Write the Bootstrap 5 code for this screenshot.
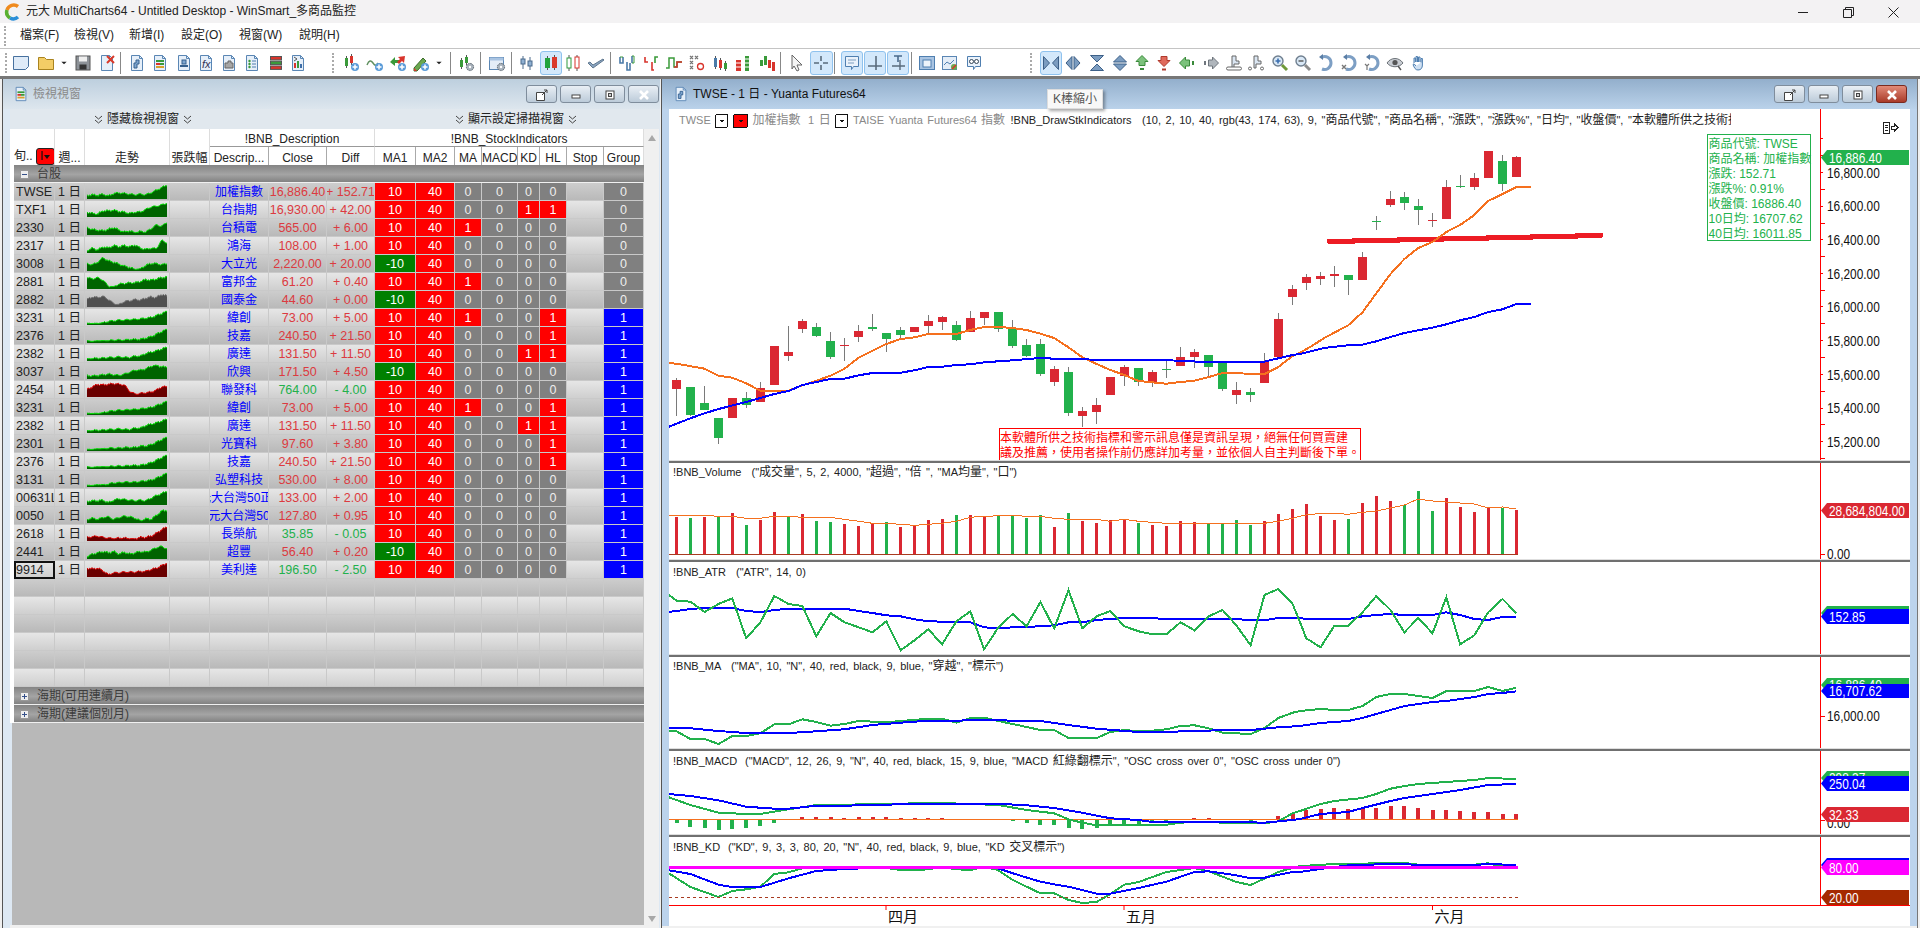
<!DOCTYPE html>
<html>

<head>
    <meta charset="utf-8">
    <title>元大 MultiCharts64</title>
    <link rel="stylesheet" href="https://cdn.jsdelivr.net/npm/bootstrap@5.3.0/dist/css/bootstrap.min.css">
    <style>
        html, body { height: 928px; overflow: hidden; }
        body { background: #f0f0f0; color: #222; position: relative; font: 12px/1.2 "Liberation Sans", "Noto Sans CJK TC", sans-serif; }
        .app-title { height: 23px; background: #f3f2f3; font-size: 12px; color: #222; }
        .app-title .sys { width: 45px; }
        .app-menu { height: 25px; background: #fff; }
        .app-menu #menuRow div { white-space: nowrap; }
        .grip { width: 2px; height: 20px; border-left: 2px dotted #aaa; }
        .tool-row { height: 28px; background: #fff; border-top: 1px solid #c4c4c4; }
        .tool { height: 24px; flex: none; border: 1px solid transparent; border-radius: 3px; }
        .tool.on { background: #d3e8fb; border-color: #8fc2ee; }
        .tool-sep { width: 1px; height: 22px; background: #888; flex: none; }
        .desk { height: 852px; background: #f0f0f0; border-top: 3px solid #777; }
        .mdi-left { width: 658px; margin-left: 2px; background: #dde8f3; border-left: 1px solid #555; }
        .mdi-right { width: 1257px; margin-left: 1px; background: #bcd3ec; border-left: 1px solid #555; border-right: 1px solid #777; }
        .win-head { height: 30px; flex: none; }
        .mdi-left .win-head { background: linear-gradient(#bdcfde, #dde6ee); color: #8a8a8a; padding-left: 10px; padding-right: 1px; }
        .mdi-right .win-head { background: linear-gradient(#93afcc, #bad2ea); color: #111; font-size: 12px; padding-left: 11px; padding-right: 10px; }
        .wctl { width: 31px; height: 18px; padding: 0; border: 1px solid #7f8d9c; border-radius: 3px; background: linear-gradient(#e9eff5, #bccbd9); margin-left: 3px; line-height: 1; }
        .wctl.shut { background: linear-gradient(#e28a78, #a93b2a); border-color: #7a2a20; }
        .hide-bar { height: 20px; margin-left: 7px; background: #e1e8ee; font-size: 12px; }
        .hide-item { width: 266px; }
        .hide-item + .hide-item { margin-left: 100px; width: 280px; }
        .scan-wrap { margin-left: 7px; height: 799px; }
        .scan-col { width: 634px; }
        .scan-top { background: #fff; padding-left: 4px; }
        .scan-grid { width: 630px; margin: 0; table-layout: fixed; border-collapse: separate; border-spacing: 0; font-size: 12.5px; }
        .scan-grid th { height: 18px; padding: 0; font-weight: 400; font-size: 12px; text-align: center; background: #fff; color: #222; border: 0; border-right: 1px solid #ddd; white-space: nowrap; overflow: hidden; }
        .scan-grid th.under { border-bottom: 1px solid #999; }
        .scan-grid th.sub { border-right: 1px solid #aaa; }
        .scan-grid td { height: 18px; padding: 1px 0 0; line-height: 16px; text-align: center; white-space: nowrap; overflow: hidden; border: 0; border-right: 1px solid #c9c9c9; border-bottom: 1px solid #c9c9c9; color: #222; }
        .scan-grid tr.dim td { background: linear-gradient(#cdcdcd, #b9b9b9); }
        .scan-grid tr.pale td { background: linear-gradient(#e6e6e6, #cfcfcf); }
        .scan-grid td.sym { text-align: left; padding-left: 2px; }
        .scan-grid td.name { color: #0000ff; font-size: 12px; }
        .scan-grid td.rise { color: #dc3a40; }
        .scan-grid td.fall { color: #22b14c; }
        .scan-grid tr td.cr { background: #f00; color: #fff; }
        .scan-grid tr td.cg { background: #008000; color: #fff; }
        .scan-grid tr td.cn { background: #808080; color: #eee; }
        .scan-grid tr td.cb { background: #00f; color: #fff; }
        .scan-grid tr td.sel { outline: 2px solid #111; outline-offset: -2px; }
        .scan-grid tr td.grp { height: 18px; background: linear-gradient(#848484, #a4a4a4 55%, #828282); color: #3c3c3c; font-size: 12px; text-align: left; padding-left: 6px; border-right: 0; border-bottom: 1px solid #f0f0f0; }
        .tree-box { display: inline-block; width: 9px; height: 9px; margin-right: 8px; background: #eee; border: 1px solid #999; position: relative; top: 1px; }
        .tree-box::before { content: ""; position: absolute; left: 1px; right: 1px; top: 3px; height: 1px; background: #35508a; }
        .tree-box.fold::after { content: ""; position: absolute; top: 1px; bottom: 1px; left: 3px; width: 1px; background: #35508a; }
        .clip-mid { display: flex; justify-content: center; overflow: hidden; }
        .clip-mid span { flex: none; }
        .pick { display: inline-flex; align-items: center; justify-content: center; width: 19px; height: 17px; background: #f00; border: 1px solid #222; border-radius: 3px; vertical-align: middle; font-size: 12px; color: #111; margin-left: 3px; }
        .pick i { width: 0; height: 0; border: 3px solid transparent; border-top: 4px solid #111; border-bottom: 0; margin-left: 1px; }
        .scan-rest { background: #b8b8b8; margin-left: 2px; }
        .scan-end { height: 3px; background: #f0f0f0; }
        .scroll-col { width: 15px; background: #f0f0f0; }
        .pane { background: #fff; flex: none; display: block; }
        .pane polyline, .pane rect, .pane path { shape-rendering: crispEdges; }
        .sash { height: 3px; flex: none; background: linear-gradient(#dedede 34%, #707070 34%); }
        .time-row { background: #fff; flex: none; display: block; }
        .chart-col { width: 1241px; margin-left: 7px; }
        .chart-foot { background: #f0f0f0; }
        svg text { font-family: "Liberation Sans", "Noto Sans CJK TC", sans-serif; font-size: 11px; word-spacing: 1.5px; white-space: pre; }
        svg .cj { font-size: 12px; }
        svg text.ax { font-size: 14px; word-spacing: 0; fill: #111; }
        svg text.tg { font-size: 14px; word-spacing: 0; fill: #fff; }
        svg text.nfo { font-size: 12px; fill: #22b14c; word-spacing: 0; }
        svg text.warn { font-size: 12px; fill: #f00; word-spacing: 0; }
        svg text.mon { font-size: 15px; fill: #111; }
        .hint { position: absolute; left: 1047px; top: 89px; width: 56px; height: 20px; background: #f8f8f8; border: 1px solid #ddd; box-shadow: 2px 2px 3px rgba(0, 0, 0, .35); font-size: 12px; line-height: 18px; text-align: center; color: #555; }
    </style>
</head>

<body>
    <div class="app-title d-flex align-items-center">
        <svg width="18" height="18" viewBox="0 0 18 18" class="ms-1 flex-none">
            <path d="M14 3.500A7 7 0 0 0 3 7" fill="none" stroke="#f08a1d" stroke-width="3.500" />
            <path d="M3 7a7 7 0 0 0 3 8" fill="none" stroke="#58b030" stroke-width="3.500" />
            <path d="M6 15a7 7 0 0 0 8-1" fill="none" stroke="#2a8fd8" stroke-width="3.500" />
        </svg>
        <span class="ms-1">元大 MultiCharts64 - Untitled Desktop - WinSmart_多商品監控</span>
        <div class="ms-auto d-flex me-1">
            <div class="sys text-center"><svg width="11" height="11" viewBox="0 0 11 11"><path d="M0 5.500h10" stroke="#222" /></svg></div>
            <div class="sys text-center"><svg width="11" height="11" viewBox="0 0 11 11"><path d="M.5 2.500h8v8h-8zM2.500 2.500v-2h8v8h-2" fill="none" stroke="#222" /></svg></div>
            <div class="sys text-center"><svg width="11" height="11" viewBox="0 0 11 11"><path d="M.5.5l10 10M10.500.5l-10 10" stroke="#222" /></svg></div>
        </div>
    </div>
    <div class="app-menu d-flex align-items-center ps-1">
        <div class="grip"></div>
        <div id="menuRow" class="d-flex"></div>
    </div>
    <div id="toolRow" class="tool-row d-flex align-items-center"></div>

    <div class="desk d-flex">
        <div class="mdi-left d-flex flex-column">
            <div class="win-head d-flex align-items-center">
                <svg width="16" height="18" viewBox="0 0 18 18" id="leftIcon"></svg>
                <span class="ms-1">檢視視窗</span>
                <div class="ms-auto d-flex wctl-row"></div>
            </div>
            <div class="hide-bar d-flex">
                <div class="hide-item d-flex justify-content-center align-items-center gap-1"><span class="dbl"></span>隱藏檢視視窗<span class="dbl"></span></div>
                <div class="hide-item d-flex justify-content-center align-items-center gap-1"><span class="dbl"></span>顯示設定掃描視窗<span class="dbl"></span></div>
            </div>
            <div class="scan-wrap d-flex">
                <div class="scan-col d-flex flex-column">
                    <div class="scan-top">
                        <table class="table scan-grid">
                            <colgroup id="scanCols"></colgroup>
                            <thead>
                                <tr>
                                    <th rowspan="2"><span>旬..</span><span class="pick">I<i></i></span></th>
                                    <th rowspan="2">週...</th>
                                    <th rowspan="2">走勢</th>
                                    <th rowspan="2">張跌幅</th>
                                    <th colspan="3" class="under">!BNB_Description</th>
                                    <th colspan="8" class="under">!BNB_StockIndicators</th>
                                </tr>
                                <tr>
                                    <th class="sub">Descrip...</th>
                                    <th class="sub">Close</th>
                                    <th>Diff</th>
                                    <th class="sub">MA1</th>
                                    <th class="sub">MA2</th>
                                    <th class="sub">MA</th>
                                    <th class="sub">MACD</th>
                                    <th class="sub">KD</th>
                                    <th class="sub">HL</th>
                                    <th class="sub">Stop</th>
                                    <th>Group</th>
                                </tr>
                            </thead>
                            <tbody id="scanBody"></tbody>
                        </table>
                    </div>
                    <div class="scan-rest flex-grow-1"></div>
                    <div class="scan-end"></div>
                </div>
                <div class="scroll-col d-flex flex-column justify-content-between align-items-center py-1">
                    <svg width="10" height="10" viewBox="0 0 10 10"><path d="M5 2l4 6H1z" fill="#a8a8a8" /></svg>
                    <svg width="10" height="10" viewBox="0 0 10 10"><path d="M5 8L1 2h8z" fill="#a8a8a8" /></svg>
                </div>
            </div>
        </div>

        <div class="mdi-right d-flex flex-column">
            <div class="win-head d-flex align-items-center">
                <svg width="16" height="18" viewBox="0 0 18 18" id="rightIcon"></svg>
                <span class="ms-1">TWSE - 1 日 - Yuanta Futures64</span>
                <div class="ms-auto d-flex wctl-row"></div>
            </div>
            <div id="chartCol" class="chart-col d-flex flex-column"></div>
            <div class="chart-foot flex-grow-1"></div>
        </div>
    </div>
    <div class="hint">K棒縮小</div>

    <script>
        const UP = '#da2832', DN = '#22b14c', BLUE = '#0000ff', ORANGE = '#f5701e';
        const FONT_CJK = /[\u3000-\u9fff\uff00-\uffef]+/g;

        // menu
        const menuRow = document.getElementById('menuRow');
        [[20, '檔案(F)'], [74, '檢視(V)'], [129, '新增(I)'], [181, '設定(O)'], [239, '視窗(W)'], [299, '說明(H)']].forEach(([x, t], i, all) => {
            let s = document.createElement('div');
            s.textContent = t;
            s.style.width = ((all[i + 1] ? all[i + 1][0] : x + 60) - x) + 'px';
            menuRow.append(s);
        });
        menuRow.style.marginLeft = '14px';

        // toolbar icons, 18x18
        const doc = (inner) => `<path d="M3.500 1.500h8l3 3v12h-11z" fill="#e6eff9" stroke="#5a86b4"/><path d="M11.500 1.500v3h3" fill="none" stroke="#5a86b4"/>${inner}`;
        const bar = (x, y, h, c, w = 3) => `<path d="M${x + w / 2} ${y - 2}v${h + 4}" stroke="#555"/><rect x="${x}" y="${y}" width="${w}" height="${h}" fill="${c}"/>`;
        const plus = `<circle cx="13" cy="13" r="4" fill="#5a9bd8"/><path d="M13 10.500v5M10.500 13h5" stroke="#fff" stroke-width="1.500"/>`;
        const gear = `<circle cx="13" cy="13" r="3.600" fill="#a8b2bc" stroke="#5c6670" stroke-dasharray="1.600 .8"/><circle cx="13" cy="13" r="1.200" fill="#fff"/>`;
        const tri = (d) => `<path d="${d}" fill="#7b9cc0" stroke="#3d6088"/>`;
        const sb = `<path d="M2.500 2.500h13v10h-5l-2 3v-3h-6z" fill="#eaf2fb" stroke="#4f7fb0"/>`;
        const wave = (c) => `<path d="M1 11c2-5 4-5 6-2s3 3 5 0" fill="none" stroke="${c}" stroke-width="1.400"/>`;
        const glass = (c, s) => `<circle cx="7" cy="7" r="5" fill="#d9e8f6" stroke="#6f7f8f" stroke-width="1.400"/><path d="M11 11l5 5" stroke="${c}" stroke-width="3"/><path d="${s}" stroke="${c === '#6f9a3a' ? '#3b6fb0' : '#666'}" stroke-width="1.600"/>`;
        const curl = (extra) => `<path d="M5 3a6.500 6.500 0 1 1 0 12" fill="none" stroke="#7d9fc4" stroke-width="3"/><path d="M6 0v6L2 3z" fill="#5a7ea6"/>${extra}`;
        const ICON = {
            note: `<path d="M1.500 2.500h15v10l-3 3h-12z" fill="#dfebf8" stroke="#47719f"/>`,
            folder: `<path d="M1.500 3.500h6l2 2h7v10h-15z" fill="#f3cd66" stroke="#a9831f"/>`,
            arrow: `<path d="M5 7h8l-4 4z" fill="#222"/>`,
            save: `<rect x="2" y="2" width="14" height="14" fill="#8d9298" stroke="#555"/><rect x="5" y="2.500" width="8" height="5" fill="#eee"/><rect x="5.500" y="10.500" width="7" height="5" fill="#333"/>`,
            del: doc(`<path d="M9 2l7 7M16 2l-7 7" stroke="#d93a2a" stroke-width="2"/>`),
            chartDoc: doc(`<path d="M6 9h2V6h3v4H9v4H6z" fill="#7fa6d0" stroke="#35608e"/>`),
            blockDoc: doc(`<rect x="5" y="6" width="8" height="2" fill="#3a9a3a"/><rect x="5" y="9" width="4" height="2" fill="#d8342c"/><rect x="9" y="9" width="4" height="2" fill="#3a9a3a"/><rect x="5" y="12" width="8" height="2" fill="#d8a02c"/>`),
            linkDoc: doc(`<rect x="7" y="6" width="4" height="4" fill="#7fa6d0" stroke="#35608e"/><path d="M5 12h8" stroke="#35608e" stroke-width="2"/>`),
            fxDoc: doc(`<text x="5" y="14" font-style="italic" fill="#335">fx</text>`),
            puzzleDoc: doc(`<path d="M5 9h3V7h3v2h2v5H5z" fill="#a6a6a6" stroke="#666"/>`),
            listDoc: doc(`<circle cx="6.500" cy="7" r="1.200" fill="#3a9a3a"/><circle cx="6.500" cy="10" r="1.200" fill="#3a9a3a"/><circle cx="6.500" cy="13" r="1.200" fill="#3a9a3a"/><path d="M9 7h4M9 10h4M9 13h4" stroke="#4f7fb0"/>`),
            stacks: `<rect x="3.500" y="2.500" width="11" height="3.400" fill="#d8342c" stroke="#555"/><rect x="3.500" y="7.200" width="11" height="3.400" fill="#3a9a3a" stroke="#555"/><rect x="3.500" y="12" width="11" height="3.400" fill="#d8342c" stroke="#555"/>`,
            multiDoc: doc(`<rect x="5" y="9" width="2" height="5" fill="#d8342c"/><rect x="8" y="7" width="2" height="7" fill="#3a9a3a"/><rect x="11" y="10" width="2" height="4" fill="#3f6ea8"/><path d="M5 3l3 2-3 2" stroke="#555" fill="none"/>`),
            candlePlus: bar(3, 4, 8, '#3a9a3a') + bar(8, 2, 7, '#d8342c') + plus,
            wavePlus: wave('#5e8f5e') + plus,
            arrowsPlus: `<path d="M1 8l5-5v3h4v3H6v3z" fill="#3a9a3a"/><path d="M16 2l-1 7-2-2-3 3-2-2 3-3-2-2z" fill="#d8342c"/>` + plus,
            pencilPlus: `<path d="M2 14l9-10 3 3-9 10H2z" fill="#6aa84f" stroke="#3b6b2a"/><path d="M2 14l3 3H2z" fill="#d8342c"/>` + plus,
            candleGear: bar(3, 6, 7, '#3a9a3a') + bar(8, 3, 6, '#3a9a3a') + gear,
            winGear: `<rect x="1.500" y="3.500" width="14" height="12" fill="#e4edf7" stroke="#5a86b4"/><rect x="1.500" y="3.500" width="14" height="3" fill="#a9c4e2"/>` + gear,
            barsBlue: `<path d="M5 2v13M12 3v13" stroke="#4a6a8c"/><rect x="3" y="5" width="4" height="5" fill="#8fb0d2" stroke="#4a6a8c"/><rect x="10" y="7" width="4" height="5" fill="#8fb0d2" stroke="#4a6a8c"/>`,
            candleSolid: bar(3, 4, 10, '#22a33c', 5) + bar(10, 3, 11, '#da3a2c', 5),
            candleHollow: `<path d="M5 1v16M13 1v16" stroke="#555"/><rect x="3" y="4" width="4" height="10" fill="#fff" stroke="#2f9a3f"/><rect x="11" y="3" width="4" height="11" fill="#fff" stroke="#d8342c"/>`,
            tick: `<path d="M1 9l5 5L17 6l-1-1-10 6-3-3z" fill="#8aa4c0" stroke="#60788f"/>`,
            zigBlue: `<path d="M2 3v6h3V3M9 8v8h3V9M14 2v7" fill="none" stroke="#4a7aa8" stroke-width="1.600"/><path d="M2 3h3M14 2h2v7h-2" stroke="#3a9a3a" fill="none"/>`,
            zigMix: `<path d="M2 3v5h3M9 8v8h2" fill="none" stroke="#d8342c" stroke-width="1.600"/><path d="M12 9V3h3" fill="none" stroke="#3a9a3a" stroke-width="1.600"/>`,
            step: `<path d="M1 14h3V4h5v9h3v-5h5" fill="none" stroke="#3a9a3a" stroke-width="1.500"/><path d="M9 13h3v-5h5" fill="none" stroke="#d8342c" stroke-width="1.500"/>`,
            xo: `<path d="M2 2l3 3M5 2L2 5M2 7l3 3M5 7l-3 3M2 12l3 3M5 12l-3 3M7 2l3 3M10 2L7 5" stroke="#777" stroke-width="1.300"/><circle cx="12.500" cy="12.500" r="3" fill="#fff" stroke="#d8342c" stroke-width="1.300"/>`,
            candleMix: bar(2, 4, 9, '#4a7aa8') + bar(7, 6, 8, '#d8342c') + bar(12, 9, 6, '#3a9a3a'),
            blocks: `<path d="M11 2h4v15h-4z" fill="#3a9a3a"/><path d="M2 6h5v11H2z" fill="#d8342c"/><path d="M2 9h5M2 13h5M11 5h4M11 9h4M11 13h4" stroke="#fff"/>`,
            kagi: `<rect x="2" y="6" width="3" height="6" fill="#3a9a3a"/><rect x="6" y="2" width="3" height="9" fill="#3a9a3a"/><rect x="10" y="6" width="3" height="8" fill="#d8342c"/><rect x="14" y="8" width="3" height="9" fill="#d8342c"/>`,
            cursor: `<path d="M4 1l10 10H9l2 5-2 1-3-5-2 3z" fill="#f4f4f4" stroke="#666"/>`,
            cross: `<path d="M9 2v5M9 11v5M2 9h5M11 9h5" stroke="#5a6b7c" stroke-width="1.600"/>`,
            bubble: `<path d="M2.500 2.500h13v10h-5l-2 3v-3h-6z" fill="#eaf2fb" stroke="#4f7fb0"/><path d="M5 6h8M5 9h6" stroke="#7f9fc0"/>`,
            crossLine: `<path d="M10 2v14M2 12h14" stroke="#5a6b7c" stroke-width="1.600"/>`,
            crossText: `<path d="M5 2h8M9 2v6" stroke="#4a6a8c" stroke-width="1.600"/><path d="M11 6v10M3 12h13" stroke="#5a6b7c" stroke-width="1.400"/>`,
            window: `<rect x="1.500" y="2.500" width="15" height="13" fill="#a9c4e2" stroke="#4f7fb0"/><rect x="5" y="6" width="8" height="7" fill="#eef4fb" stroke="#4f7fb0"/>`,
            chartWin: `<rect x="1.500" y="2.500" width="14" height="13" fill="#e4edf7" stroke="#5a86b4"/><path d="M3 11l3-3 3 2 4-4" fill="none" stroke="#4f7fb0"/><circle cx="13" cy="13" r="3" fill="#6aa84f"/><path d="M11 15l4-4" stroke="#d8342c" stroke-width="1.500"/>`,
            binoc: sb + `<circle cx="6.500" cy="7.500" r="2" fill="#fff" stroke="#345"/><circle cx="11.500" cy="7.500" r="2" fill="#fff" stroke="#345"/>`,
            inward: tri('M1.500 2.500v13l6-6.500zM16.500 2.500v13l-6-6.500z'),
            outward: tri('M8 2.500v13L2 9zM10 2.500v13l6-6.500z'),
            hourglass: tri('M2.500 1.500h13L9 8zM2.500 16.500h13L9 10z'),
            updown: tri('M9 1.500l6.500 6.500h-13zM9 16.500L2.500 10h13z'),
            goUp: `<path d="M9 1.500l6 6h-3v4H6v-4H3z" fill="#7cc27c" stroke="#3a8a3a"/><path d="M7 15h4" stroke="#3a8a3a" stroke-width="2"/>`,
            goDn: `<path d="M9 12.500l6-6h-3v-4H6v4H3z" fill="#e06a5c" stroke="#b03a2c"/><path d="M7 15.500h4" stroke="#b03a2c" stroke-width="2"/>`,
            goLeft: `<path d="M1.500 9l6-6v3h4v6h-4v3z" fill="#7cc27c" stroke="#3a8a3a"/><path d="M15 7v4" stroke="#3a8a3a" stroke-width="2"/>`,
            goRight: `<path d="M16.500 9l-6-6v3h-4v6h4v3z" fill="#b0b6bc" stroke="#6f767d"/><path d="M3 7v4" stroke="#6f767d" stroke-width="2"/>`,
            widen: `<path d="M7 2h4v5h3v3H9v4H7z" fill="#dbe6f2" stroke="#666"/><rect x="1.500" y="13" width="15" height="3" rx="1.500" fill="#fff" stroke="#666"/>`,
            narrow: `<path d="M7 2h4v5h3v3H9v4H7z" fill="#dbe6f2" stroke="#666"/><circle cx="3" cy="14.500" r="1.500" fill="#fff" stroke="#666"/><circle cx="15" cy="14.500" r="1.500" fill="#fff" stroke="#666"/>`,
            zoomIn: glass('#6f9a3a', 'M4.500 7h5M7 4.500v5'),
            zoomOut: glass('#8c8c8c', 'M4.500 7h5'),
            undo: curl(''),
            undoX: curl(`<path d="M1 11l4 4M5 11l-4 4" stroke="#777" stroke-width="1.400"/>`),
            undoY: curl(`<path d="M1 10l2 2 2-2M3 12v4" stroke="#777" stroke-width="1.200" fill="none"/>`),
            eye: `<path d="M1 9c4-6 12-6 16 0-4 5-12 5-16 0z" fill="#c8ccd2" stroke="#6c7278"/><circle cx="9" cy="8.500" r="2.600" fill="#555"/><path d="M12 12l3 4" stroke="#555" stroke-width="1.400"/>`,
            hand: `<path d="M5 9V4h1.400v4M7 8V2.500h1.500V8M9.500 8V3H11v5M12 8.500V4.500h1.400V11c0 3-1.400 5-4.400 5-2.600 0-3.600-2-5-5.400l1-.8L7 12" fill="#cfe0f2" stroke="#4f7fb0"/>`
        };

        // toolbar layout: [centre x, icon, width, highlighted]
        const tools = [['g', 5], [21, 'note'], [45.5, 'folder'], [64, 'arrow', 14], [83, 'save'], [107, 'del'], ['s', 120], [137, 'chartDoc'], [160, 'blockDoc'], [183.5, 'linkDoc'], [206, 'fxDoc'], [229, 'puzzleDoc'], [252, 'listDoc'], [276, 'stacks'], [298, 'multiDoc'],
        ['g', 332], [350.5, 'candlePlus'], [374.5, 'wavePlus'], [398, 'arrowsPlus'], [421, 'pencilPlus'], [439, 'arrow', 14], ['s', 449.5], [466, 'candleGear'], ['s', 480], [496.5, 'winGear'], ['s', 511], [527, 'barsBlue'], [551, 'candleSolid', 22, 1], [573, 'candleHollow'], [596, 'tick'], ['s', 610], [627, 'zigBlue'], [652, 'zigMix'], [674, 'step'], [696.5, 'xo'], [721, 'candleMix'], [743, 'blocks'], [766.5, 'kagi'], ['s', 780], [797, 'cursor'], [821, 'cross', 23, 1], ['s', 834], [852, 'bubble', 22, 1], [875, 'crossLine', 22, 1], [897.5, 'crossText', 22, 1], ['s', 911], [927, 'window'], [950, 'chartWin'], [973.5, 'binoc'],
        ['g', 1030], [1050.5, 'inward', 22, 1], [1073, 'outward'], [1096.5, 'hourglass'], [1119.5, 'updown'], [1142, 'goUp'], [1164, 'goDn'], [1187, 'goLeft'], [1211, 'goRight'], [1233.5, 'widen'], [1256, 'narrow'], [1279.5, 'zoomIn'], [1302.5, 'zoomOut'], [1326, 'undo'], [1350, 'undoX'], [1373, 'undoY'], [1394.5, 'eye'], [1418, 'hand']];
        const toolRow = document.getElementById('toolRow');
        let edge = 0;
        tools.forEach(t => {
            let el = document.createElement('div');
            let left, w;
            if (t[0] === 'g' || t[0] === 's') {
                w = t[0] === 'g' ? 2 : 1;
                left = t[1];
                el.className = t[0] === 'g' ? 'grip flex-none' : 'tool-sep';
            } else {
                w = t[2] || 23;
                left = t[0] - w / 2;
                el.className = 'tool d-flex align-items-center justify-content-center' + (t[3] ? ' on' : '');
                el.innerHTML = `<svg width="18" height="18" viewBox="0 0 18 18">${ICON[t[1]]}</svg>`;
                el.style.width = w + 'px';
            }
            el.style.marginLeft = (left - edge) + 'px';
            edge = left + w;
            toolRow.append(el);
        });

        document.getElementById('leftIcon').innerHTML = ICON.blockDoc;
        document.getElementById('rightIcon').innerHTML = ICON.chartDoc;

        // window buttons
        const ctlGlyph = [
            `<path d="M1.500 4.500h8v8h-8z" fill="#fff" stroke="#444"/><path d="M7 7l5-5M9 2h3v3" stroke="#444" fill="none"/>`,
            `<rect x="3" y="7" width="8" height="3" fill="#fff" stroke="#444"/>`,
            `<rect x="3" y="3" width="8" height="8" fill="#fff" stroke="#444"/><rect x="5.500" y="5.500" width="3" height="3" fill="#ccc" stroke="#444"/>`,
            `<path d="M3 3l8 8M11 3l-8 8" stroke="#fff" stroke-width="2.600"/>`
        ];
        document.querySelectorAll('.wctl-row').forEach(row => {
            ctlGlyph.forEach((g, i) => {
                let b = document.createElement('button');
                b.className = 'btn wctl' + (i === 3 && row.closest('.mdi-right') ? ' shut' : '');
                b.innerHTML = `<svg width="14" height="14" viewBox="0 0 14 14">${g}</svg>`;
                row.append(b);
            });
        });
        document.querySelectorAll('.dbl').forEach(s => {
            s.innerHTML = `<svg width="9" height="10" viewBox="0 0 9 10"><path d="M1 1l3.500 3L8 1M1 5l3.500 3L8 5" fill="none" stroke="#444"/></svg>`;
        });

        // scanner table
        const colw = [41, 30, 85, 40, 59, 58, 48, 41, 39, 27, 36, 22, 27, 37, 40];
        document.getElementById('scanCols').innerHTML = colw.map(w => `<col width="${w}">`).join('');

        const spark = {
            TWSE: [.2, .25, .2, .3, .15, .35, .4, .35, .3, .25, .3, .25, .4, .6, .8, 1],
            TXF1: [.3, .2, .15, .4, .4, .45, .35, .3, .2, .3, .3, .5, .7, .75, .85, 1],
            2330: [.5, .35, .3, .25, .35, .5, .3, .15, .25, .1, .2, .15, .4, .7, .6, .9],
            2317: [.1, .3, .15, .4, .3, .5, .4, .5, .4, .55, .3, .2, .3, .25, .9, .7],
            3008: [.5, .4, .6, .95, .7, .6, .45, .3, .2, .05, .1, .35, .5, .5, .4, .5],
            2881: [.8, .7, .8, .6, .15, .1, .3, .35, .4, .4, .5, .65, .6, .7, .8, .85],
            2882: [.5, .7, .65, .75, .5, .2, .1, .35, .4, .5, .45, .6, .7, .65, .9, .75],
            3231: [.05, .05, .05, .1, .2, .25, .3, .3, .35, .35, .4, .45, .5, .65, .8, 1],
            2376: [.1, .05, .1, .1, .1, .15, .15, .15, .2, .2, .2, .3, .4, .6, .8, 1],
            2382: [.1, .1, .15, .15, .2, .2, .25, .2, .2, .3, .3, .5, .6, .7, .85, 1],
            3037: [.2, .15, .2, .25, .3, .25, .2, .3, .45, .6, .6, .7, .9, 1, .85, .85],
            2454: [.5, .7, .9, .85, .9, .95, .9, .85, .35, .15, .2, .25, .3, .45, .7, .7],
            2301: [.05, .05, .1, .1, .15, .15, .15, .2, .2, .2, .3, .3, .4, .6, .8, 1],
            3131: [.05, .05, .1, .1, .15, .25, .25, .3, .3, .3, .35, .4, .45, .6, .8, 1],
            '00631L': [.2, .25, .25, .3, .1, .3, .4, .35, .3, .25, .3, .25, .45, .65, .8, 1],
            '0050': [.2, .3, .2, .35, .4, .2, .35, .45, .4, .3, .1, .25, .2, .5, .85, .9],
            2618: [.2, .25, .3, .2, .15, .1, .15, .15, .1, .1, .2, .2, .3, .5, .8, 1],
            2441: [.1, .3, .4, .5, .4, .5, .3, .45, .3, .4, .5, .45, .6, .8, .9, .7],
            9914: [.6, .55, .6, .4, .1, .25, .25, .3, .3, .3, .35, .35, .5, .6, .8, 1]
        };
        function sparkSvg(sym, kind) {
            const v = spark[sym], n = 64;
            const colour = { up: ['#006400', '#00e000'], dn: ['#6a0000', '#e00000'], fl: ['#505050', '#707070'] }[kind];
            let pts = [];
            for (let i = 0; i <= n; i++) {
                let p = i / n * (v.length - 1), a = Math.floor(p), b = Math.min(a + 1, v.length - 1);
                let base = v[a] + (v[b] - v[a]) * (p - a);
                let h = base + (Math.sin(i * 7.3 + v[3] * 9) + Math.sin(i * 3.1 + v[5] * 5)) * .05 * (base > .12 ? 1 : .2);
                pts.push([(i / n * 80).toFixed(1), (14 - Math.max(.03, Math.min(1, h)) * 13).toFixed(1)]);
            }
            let line = pts.map(p => p.join(',')).join(' ');
            return `<svg width="80" height="15" viewBox="0 0 80 15" class="d-block mx-auto"><polygon points="0,15 ${line} 80,15" fill="${colour[0]}"/><polyline points="${line}" fill="none" stroke="${colour[1]}"/></svg>`;
        }

        const rows = [
            ['TWSE', '加權指數', '16,886.40', '+ 152.71', 10, 0, 0, 0, 0, 0],
            ['TXF1', '台指期', '16,930.00', '+ 42.00', 10, 0, 0, 1, 1, 0],
            ['2330', '台積電', '565.00', '+ 6.00', 10, 1, 0, 0, 0, 0],
            ['2317', '鴻海', '108.00', '+ 1.00', 10, 0, 0, 0, 0, 0],
            ['3008', '大立光', '2,220.00', '+ 20.00', -10, 0, 0, 0, 0, 0],
            ['2881', '富邦金', '61.20', '+ 0.40', 10, 1, 0, 0, 0, 0],
            ['2882', '國泰金', '44.60', '+ 0.00', -10, 0, 0, 0, 0, 0],
            ['3231', '緯創', '73.00', '+ 5.00', 10, 1, 0, 0, 1, 1],
            ['2376', '技嘉', '240.50', '+ 21.50', 10, 0, 0, 0, 1, 1],
            ['2382', '廣達', '131.50', '+ 11.50', 10, 0, 0, 1, 1, 1],
            ['3037', '欣興', '171.50', '+ 4.50', -10, 0, 0, 0, 0, 1],
            ['2454', '聯發科', '764.00', '- 4.00', 10, 0, 0, 0, 0, 1],
            ['3231', '緯創', '73.00', '+ 5.00', 10, 1, 0, 0, 1, 1],
            ['2382', '廣達', '131.50', '+ 11.50', 10, 0, 0, 1, 1, 1],
            ['2301', '光寶科', '97.60', '+ 3.80', 10, 0, 0, 0, 1, 1],
            ['2376', '技嘉', '240.50', '+ 21.50', 10, 0, 0, 0, 1, 1],
            ['3131', '弘塑科技', '530.00', '+ 8.00', 10, 0, 0, 0, 0, 1],
            ['00631L', '元大台灣50正2', '133.00', '+ 2.00', 10, 0, 0, 0, 0, 1],
            ['0050', '元大台灣50', '127.80', '+ 0.95', 10, 0, 0, 0, 0, 1],
            ['2618', '長榮航', '35.85', '- 0.05', 10, 0, 0, 0, 0, 1],
            ['2441', '超豐', '56.40', '+ 0.20', -10, 0, 0, 0, 0, 1],
            ['9914', '美利達', '196.50', '- 2.50', 10, 0, 0, 0, 0, 1]
        ];
        const flag = v => `<td class="${v ? 'cr' : 'cn'}">${v}</td>`;
        let body = `<tr><td colspan="15" class="grp"><span class="tree-box"></span>台股</td></tr>`;
        rows.forEach((r, i) => {
            let fall = r[3][0] === '-', tone = fall ? 'fall' : 'rise';
            let kind = fall ? 'dn' : r[0] === '2882' ? 'fl' : 'up';
            body += `<tr class="${i % 2 ? 'pale' : 'dim'}">
                <td class="sym ${i === rows.length - 1 ? 'sel' : ''}">${r[0]}</td><td>1 日</td>
                <td>${sparkSvg(r[0], kind)}</td><td></td>
                <td class="name"><div class="clip-mid"><span>${r[1]}</span></div></td>
                <td class="${tone}"><div class="clip-mid"><span>${r[2]}</span></div></td>
                <td class="${tone}"><div class="clip-mid"><span>${r[3]}</span></div></td>
                <td class="${r[4] > 0 ? 'cr' : 'cg'}">${r[4]}</td><td class="cr">40</td>
                ${flag(r[5])}${flag(r[6])}${flag(r[7])}${flag(r[8])}<td></td>
                <td class="${r[9] ? 'cb' : 'cn'}">${r[9]}</td></tr>`;
        });
        for (let i = 0; i < 6; i++) {
            body += `<tr class="${i % 2 ? 'pale' : 'dim'}">` + '<td></td>'.repeat(15) + '</tr>';
        }
        ['海期(可用連續月)', '海期(建議個別月)'].forEach(t => {
            body += `<tr><td colspan="15" class="grp"><span class="tree-box fold"></span>${t}</td></tr>`;
        });
        document.getElementById('scanBody').innerHTML = body;

        // chart helpers: points are traced from two crops, left half and right half of the chart
        const L = (pts, y0) => pts.map(([x, y]) => [660 + x / 2.24, y0 + y / 3]);
        const R = (pts, y0) => pts.map(([x, y]) => [1300 + x / 2.529, y0 + y / 3]);
        const join = (a, b) => [...a.filter(p => p[0] < 1299), ...b];
        const poly = (pts, c, w, extra = '') => `<polyline points="${pts.map(p => p[0].toFixed(1) + ',' + p[1].toFixed(1)).join(' ')}" fill="none" stroke="${c}" stroke-width="${w}" ${extra}/>`;
        const barX = i => 676.5 + 14 * i;
        const mix = s => s.replace(FONT_CJK, m => `<tspan class="cj">${m}</tspan>`);
        const txt = (x, y, s, fill = '#222', extra = '') => `<text x="${x}" y="${y}" fill="${fill}" ${extra}>${mix(s)}</text>`;
        const axisW = s => [...s].reduce((a, c) => a + (c === ',' || c === '.' ? 3.3 : 6.6), 0);
        const axisLabel = (y, s) => `<text class="ax" x="1827" y="${y + 5}" textLength="${axisW(s)}" lengthAdjust="spacingAndGlyphs">${s}</text>`;
        const tag = (y1, y2, c, s, fg = '') => `<polygon points="1821,${(y1 + y2) / 2} 1827,${y1} 1909,${y1} 1909,${y2} 1827,${y2}" fill="${c}"/>` +
            (s ? `<text class="tg" x="1829" y="${(y1 + y2) / 2 + 5}" textLength="${axisW(s)}" lengthAdjust="spacingAndGlyphs" ${fg}>${s}</text>` : '');
        const axisLine = (y1, y2) => `<path d="M1820 ${y1}V${y2}" stroke="#f00"/>`;
        const tick = (y, w = 5) => `<path d="M1820 ${y}h${w}" stroke="#f00"/>`;

        // price pane: [wick top, body top, body bottom, wick bottom], y in crop pixels
        const cL = [[805, 810, 837, 918, 1], [831, 831, 915, 918, 0], [828, 879, 900, 900, 0], [924, 924, 984, 1002, 0], [864, 864, 924, 924, 1], [847, 864, 885, 893, 0], [816, 834, 876, 876, 1], [708, 708, 825, 825, 1], [648, 726, 738, 753, 1], [628, 633, 657, 669, 1], [639, 651, 678, 681, 0], [666, 693, 741, 748, 0], [684, 705, 708, 753, 1], [645, 663, 681, 696, 1], [612, 651, 657, 663, 0], [669, 669, 687, 726, 0], [651, 660, 675, 687, 0], [651, 651, 666, 666, 1], [615, 633, 648, 670, 1], [618, 621, 636, 660, 1], [633, 645, 690, 693, 0], [603, 624, 666, 666, 1], [606, 606, 624, 645, 1], [606, 606, 657, 666, 0], [630, 654, 708, 714, 0], [687, 705, 738, 741, 0], [687, 702, 792, 798, 0], [768, 777, 816, 828, 1], [771, 786, 909, 918, 0], [891, 903, 918, 951, 1], [864, 885, 906, 942, 1], [801, 801, 855, 855, 1], [765, 771, 798, 828, 1], [774, 774, 816, 828, 0], [780, 786, 816, 831, 1], [750, 777, 780, 804, 0], [711, 741, 768, 768, 1], [717, 726, 741, 774, 1], [735, 735, 771, 798, 0], [756, 759, 837, 843, 0], [816, 840, 855, 882, 1], [834, 846, 855, 876, 0], [729, 753, 819, 819, 1], [609, 627, 741, 741, 1], [525, 537, 561, 585, 1]];
        const cR = [[432, 442, 458, 480, 1], [426, 438, 446, 465, 1], [408, 432, 438, 471, 1], [435, 435, 450, 495, 0], [366, 381, 450, 450, 1], [258, 272, 274, 300, 0], [183, 207, 225, 231, 1], [186, 201, 219, 240, 0], [207, 228, 240, 285, 0], [249, 270, 272, 291, 1], [150, 171, 267, 267, 1], [135, 169, 172, 175, 0], [129, 144, 171, 180, 1], [63, 63, 144, 144, 1], [75, 93, 162, 183, 0], [78, 81, 141, 141, 1]];
        const candles = [...cL.map(c => [110 + c[0] / 3, 110 + c[1] / 3, 110 + c[2] / 3, 110 + c[3] / 3, c[4]]),
        ...cR.map(c => [130 + c[0] / 3, 130 + c[1] / 3, 130 + c[2] / 3, 130 + c[3] / 3, c[4]])];
        const candleSvg = candles.map((c, i) => {
            let x = barX(i), col = c[4] ? UP : DN;
            return `<path d="M${x} ${c[0].toFixed(1)}V${c[3].toFixed(1)}" stroke="#7a7a7a"/><rect x="${x - 4.5}" y="${c[1].toFixed(1)}" width="9" height="${Math.max(1, c[2] - c[1]).toFixed(1)}" fill="${col}"/>`;
        }).join('');

        const maFast = join(L([[20, 758], [50, 764], [100, 776], [131, 797], [162, 803], [193, 820], [225, 842], [288, 842], [319, 826], [350, 812], [382, 797], [413, 776], [445, 743], [476, 722], [507, 702], [539, 687], [570, 682], [601, 672], [664, 672], [695, 660], [726, 651], [758, 651], [790, 654], [821, 660], [852, 671], [883, 684], [915, 712], [946, 742], [978, 762], [1009, 780], [1040, 795], [1072, 813], [1103, 817], [1134, 821], [1166, 816], [1197, 812], [1229, 801], [1260, 789], [1291, 789], [1323, 792], [1354, 792], [1385, 771], [1417, 738]], 110),
            R([[0, 668], [30, 648], [60, 625], [122, 586], [158, 547], [193, 490], [229, 432], [264, 387], [299, 354], [335, 336], [370, 306], [405, 285], [441, 255], [476, 213], [512, 192], [547, 171], [583, 171]], 130));
        const maSlow = join(L([[20, 950], [68, 925], [100, 910], [131, 897], [193, 876], [256, 852], [288, 843], [319, 825], [350, 816], [382, 807], [413, 806], [445, 796], [476, 789], [539, 788], [570, 781], [601, 771], [632, 770], [664, 765], [695, 763], [726, 757], [758, 754], [790, 751], [852, 744], [883, 746], [946, 747], [978, 750], [1134, 750], [1166, 753], [1229, 756], [1354, 755], [1385, 745], [1417, 735]], 110),
            R([[0, 672], [30, 663], [60, 654], [122, 646], [158, 644], [193, 634], [229, 621], [264, 609], [299, 601], [335, 593], [370, 583], [405, 571], [441, 561], [476, 546], [512, 538], [547, 522], [583, 522]], 130));
        const stopSeg = [[1329, 1354, 241.3], [1354, 1399, 240.3], [1399, 1443, 239.3], [1443, 1488, 238.3], [1488, 1532, 237.3], [1532, 1577, 236.3], [1577, 1601, 235.3]]
            .map(s => `<path d="M${s[0]} ${s[2]}H${s[1]}" stroke="#ed1c24" stroke-width="5" stroke-linecap="round"/>`).join('');
        const infoLines = ['商品代號: TWSE', '商品名稱: 加權指數', '漲跌: 152.71', '漲跌%: 0.91%', '收盤價: 16886.40', '10日均: 16707.62', '40日均: 16011.85'];
        const drop = (x, w, c) => `<rect x="${x + .5}" y="114.500" width="${w}" height="13" rx="1.500" fill="${c}" stroke="#111"/><path d="M${x + w / 2 - 2.5} 119.500h6l-3 3z" fill="#111"/>`;
        const prices = ['16,800.00', '16,600.00', '16,400.00', '16,200.00', '16,000.00', '15,800.00', '15,600.00', '15,400.00', '15,200.00'];
        const priceSvg = `<svg class="pane" width="1241" height="351" viewBox="669 109 1241 351">
            <defs><clipPath id="legClip"><rect x="669" y="109" width="1062" height="24"/></clipPath></defs>
            ${candleSvg}${stopSeg}
            ${poly(maFast, ORANGE, 2)}${poly(maSlow, BLUE, 2)}
            <g clip-path="url(#legClip)">
            ${txt(679, 124, 'TWSE', '#888')}${drop(715, 12, '#fff')}${drop(733, 14, '#f00')}
            ${txt(752.5, 124, '加權指數', '#888')}${txt(808, 124, '1 日', '#888')}${drop(835, 12, '#fff')}
            ${txt(853, 124, 'TAISE', '#888')}${txt(888.5, 124, 'Yuanta Futures64', '#888')}${txt(981, 124, '指數', '#888')}
            ${txt(1010.5, 124, '!BNB_DrawStkIndicators')}
            ${txt(1142, 124, '(10, 2, 10, 40, rgb(43, 174, 63), 9, "商品代號", "商品名稱", "漲跌", "漲跌%", "日均", "收盤價", "本軟體所供之技術指標')}
            </g>
            <rect x="1707.500" y="134.500" width="103" height="106" fill="#fff" stroke="${DN}"/>
            ${infoLines.map((t, i) => `<text class="nfo" x="1708.5" y="${147.5 + i * 15}">${t}</text>`).join('')}
            <rect x="999.500" y="428.500" width="361" height="32" fill="#fff" stroke="#f00"/>
            <text class="warn" x="1000" y="441.5">本軟體所供之技術指標和警示訊息僅是資訊呈現，絕無任何買賣建</text>
            <text class="warn" x="1000" y="456.5">議及推薦，使用者操作前仍應詳加考量，並依個人自主判斷後下單。</text>
            ${axisLine(109, 460)}
            ${[138.5, 155.5, 172.5, 189.5, 206.5, 223, 239.5, 256.5, 273.5, 290, 306.5, 323.5, 340.5, 357, 374.5, 391, 408, 424.5, 441.5, 458].map((y, i) => tick(y, i % 2 ? 5 : 3)).join('')}
            ${prices.map((p, i) => axisLabel(172.5 + i * 33.7, p)).join('')}
            ${tag(150, 165, DN, '16,886.40')}
            <path d="M1883.500 122h6v11h-6zM1885 125h3M1885 127.500h3M1885 130h3" fill="#fff" stroke="#222"/><path d="M1898 127.500l-3.500-3.500v2h-3v3h3v2z" fill="#fff" stroke="#222"/>
        </svg>`;

        // volume pane
        const volL = [[186, 1], [189, 0], [186, 1], [186, 0], [174, 1], [210, 0], [195, 1], [171, 1], [183, 0], [177, 1], [198, 0], [201, 0], [207, 1], [213, 1], [204, 1], [201, 0], [216, 1], [213, 1], [195, 1], [192, 1], [180, 0], [180, 1], [183, 1], [180, 0], [180, 0], [189, 0], [180, 0], [216, 1], [174, 0], [198, 1], [204, 1], [195, 1], [192, 1], [204, 0], [210, 1], [213, 1], [198, 1], [201, 1], [204, 0], [207, 0], [195, 0], [210, 0], [198, 1], [177, 1], [162, 1]];
        const volR = [[147, 1], [183, 1], [195, 1], [192, 0], [144, 1], [123, 1], [138, 1], [150, 0], [108, 0], [168, 0], [129, 1], [156, 1], [171, 1], [159, 1], [159, 0], [165, 1]];
        const volSvg = [...volL, ...volR].map((v, i) => `<rect x="${barX(i) - 1.5}" y="${(455 + v[0] / 3).toFixed(1)}" width="3" height="${(554 - 455 - v[0] / 3).toFixed(1)}" fill="${v[1] ? UP : DN}"/>`).join('');
        const volAvg = join(L([[20, 181], [100, 181], [131, 184], [162, 184], [193, 190], [225, 190], [256, 184], [288, 184], [319, 187], [382, 187], [413, 193], [445, 199], [476, 205], [507, 205], [539, 208], [570, 211], [601, 208], [632, 205], [664, 199], [695, 187], [726, 184], [790, 181], [821, 184], [852, 184], [883, 190], [915, 193], [978, 193], [1009, 199], [1040, 193], [1072, 199], [1103, 202], [1134, 205], [1354, 205], [1385, 199], [1417, 190]], 455),
            R([[0, 184], [16, 180], [52, 175], [87, 175], [122, 178], [158, 172], [193, 168], [229, 159], [264, 150], [299, 132], [335, 138], [370, 141], [405, 144], [441, 147], [476, 159], [512, 156], [547, 162]], 455));
        const volPane = `<svg class="pane" width="1241" height="96" viewBox="669 463 1241 96">
            ${volSvg}<path d="M669 554.500H1518" stroke="#a83a20"/>${poly(volAvg, ORANGE, 1)}
            ${txt(673, 476, '!BNB_Volume')}${txt(751.5, 476, '("成交量", 5, 2, 4000, "超過", "倍 ", "MA均量", "口")')}
            ${axisLine(463, 559)}${tick(554)}${axisLabel(554, '0.00')}${tag(503, 518, UP, '28,684,804.00')}
        </svg>`;

        // ATR pane
        const atrG = join(L([[20, 420], [37, 437], [68, 440], [100, 471], [131, 447], [162, 430], [193, 550], [225, 502], [256, 423], [288, 447], [319, 453], [350, 544], [382, 474], [413, 502], [445, 517], [476, 532], [507, 499], [539, 586], [570, 556], [601, 523], [632, 568], [664, 499], [695, 469], [726, 583], [758, 517], [790, 477], [821, 514], [852, 441], [883, 520], [915, 406], [946, 520], [978, 484], [1009, 468], [1040, 514], [1072, 529], [1103, 538], [1134, 538], [1166, 502], [1197, 526], [1229, 484], [1260, 465], [1291, 511], [1323, 571], [1354, 420], [1385, 402], [1417, 447]], 455),
            R([[0, 502], [16, 550], [52, 577], [87, 512], [122, 512], [158, 472], [193, 423], [229, 465], [264, 532], [299, 489], [335, 535], [370, 427], [405, 568], [441, 541], [476, 472], [512, 432], [547, 474]], 455));
        const atrB = join(L([[20, 471], [68, 462], [100, 459], [162, 459], [193, 468], [225, 471], [256, 465], [288, 461], [413, 461], [445, 468], [476, 474], [507, 481], [539, 484], [570, 493], [601, 499], [695, 502], [726, 517], [758, 520], [790, 517], [852, 514], [883, 511], [915, 502], [946, 502], [978, 495], [1040, 489], [1103, 489], [1134, 493], [1291, 492], [1323, 496], [1354, 496], [1385, 489], [1417, 490]], 455),
            R([[0, 489], [16, 492], [122, 492], [158, 484], [193, 480], [229, 477], [264, 480], [335, 480], [370, 472], [405, 480], [441, 492], [476, 495], [512, 486], [547, 486]], 455));
        const atrPane = `<svg class="pane" width="1241" height="92" viewBox="669 562 1241 92">
            ${poly(atrB, BLUE, 2)}${poly(atrG, DN, 2)}
            ${txt(673, 576, '!BNB_ATR')}${txt(736, 576, '("ATR", 14, 0)')}
            ${axisLine(562, 654)}${tag(606, 620, DN, '')}${tag(609, 624, BLUE, '152.85')}
        </svg>`;

        // MA pane
        const mg = join(L([[20, 124], [37, 124], [68, 147], [100, 147], [131, 162], [162, 138], [193, 138], [225, 130], [256, 103], [288, 103], [319, 88], [350, 96], [382, 107], [413, 102], [445, 93], [507, 97], [539, 93], [601, 86], [632, 86], [664, 98], [695, 84], [726, 83], [758, 93], [790, 102], [821, 111], [852, 120], [883, 120], [915, 144], [978, 144], [1009, 126], [1040, 120], [1072, 124], [1103, 122], [1134, 118], [1166, 108], [1197, 106], [1229, 115], [1260, 128], [1291, 130], [1323, 132], [1354, 114], [1385, 84], [1417, 68]], 690),
            R([[0, 63], [52, 57], [87, 60], [122, 60], [158, 48], [193, 21], [229, 12], [264, 12], [299, 18], [335, 24], [370, 3], [441, 3], [476, -9], [512, 3], [547, -7]], 690));
        const mb = join(L([[20, 114], [68, 115], [131, 123], [193, 129], [288, 129], [350, 124], [413, 118], [476, 105], [539, 98], [601, 92], [664, 92], [726, 89], [790, 92], [852, 93], [915, 105], [978, 116], [1072, 126], [1197, 124], [1260, 120], [1323, 120], [1385, 112]], 690),
            R([[0, 108], [52, 99], [122, 93], [158, 84], [193, 72], [229, 60], [264, 48], [299, 42], [335, 36], [370, 33], [405, 27], [441, 21], [476, 12], [512, 9], [547, 4]], 690));
        const maPane = `<svg class="pane" width="1241" height="91" viewBox="669 657 1241 91">
            ${poly(mg, DN, 2)}${poly(mb, BLUE, 2)}
            ${txt(673, 670, '!BNB_MA')}${txt(731, 670, '("MA", 10, "N", 40, red, black, 9, blue, "穿越", "標示")')}
            ${axisLine(657, 748)}${tick(716)}${axisLabel(716, '16,000.00')}
            ${tag(678, 692, DN, '16,886.40')}${tag(684, 698, BLUE, '16,707.62')}
        </svg>`;

        // MACD pane
        const histL = [[37, 400], [68, 410], [100, 414], [131, 420], [162, 417], [193, 414], [225, 408], [256, 399], [319, 381], [350, 381], [382, 381], [413, 384], [445, 381], [476, 381], [507, 381], [539, 384], [570, 385], [601, 385], [632, 385], [790, 392], [821, 400], [852, 405], [883, 405], [915, 414], [946, 417], [978, 414], [1009, 408], [1040, 408], [1072, 405], [1103, 398], [1134, 393], [1197, 384], [1229, 384], [1323, 392], [1385, 378], [1417, 370]];
        const histR = [[16, 360], [52, 357], [87, 354], [122, 357], [158, 357], [193, 354], [229, 348], [264, 348], [299, 354], [335, 360], [370, 360], [405, 363], [441, 366], [476, 366], [512, 372], [547, 372]];
        const Z0 = 690 + 388 / 3;
        const histBar = (x, v) => {
            let y = 690 + v / 3, top = Math.min(y, Z0);
            return `<rect x="${(x - 2).toFixed(1)}" y="${top.toFixed(1)}" width="4" height="${Math.abs(y - Z0).toFixed(1)}" fill="${y < Z0 ? UP : DN}"/>`;
        };
        const histSvg = histL.map(h => histBar(660 + h[0] / 2.24, h[1])).join('') + histR.map(h => histBar(1300 + h[0] / 2.529, h[1])).join('');
        const macdG = join(L([[20, 322], [68, 345], [131, 368], [193, 372], [225, 372], [288, 358], [350, 345], [413, 345], [476, 341], [539, 341], [601, 339], [632, 339], [758, 345], [821, 360], [883, 370], [915, 388], [946, 398], [978, 406], [1040, 406], [1134, 404], [1166, 398], [1197, 396], [1229, 396], [1291, 400], [1354, 400], [1385, 394], [1417, 370]], 690),
            R([[0, 363], [52, 342], [87, 333], [158, 324], [193, 312], [229, 296], [264, 288], [299, 282], [370, 276], [441, 270], [476, 264], [547, 267]], 690));
        const macdB = join(L([[20, 312], [68, 318], [131, 331], [193, 350], [256, 356], [288, 356], [350, 347], [413, 347], [476, 345], [539, 343], [601, 341], [757, 341], [821, 346], [883, 354], [946, 368], [1009, 385], [1072, 390], [1103, 396], [1291, 396], [1354, 398], [1417, 390]], 690),
            R([[0, 387], [52, 372], [122, 366], [158, 354], [229, 333], [264, 324], [335, 312], [405, 300], [476, 285], [547, 282]], 690));
        const macdPane = `<svg class="pane" width="1241" height="83" viewBox="669 751 1241 83">
            ${histSvg}<path d="M669 ${Z0}H1518" stroke="${ORANGE}"/>${poly(macdG, DN, 2)}${poly(macdB, BLUE, 2)}
            ${txt(673, 765, '!BNB_MACD')}${txt(745, 765, '("MACD", 12, 26, 9, "N", 40, red, black, 15, 9, blue, "MACD 紅綠翻標示", "OSC cross over 0", "OSC cross under 0")')}
            ${axisLine(751, 834)}${tick(820)}${axisLabel(823, '0.00')}
            ${tag(771, 785, DN, '298.37')}${tag(776, 791, BLUE, '250.04')}${tag(807, 822, UP, '32.33')}
        </svg>`;

        // KD pane
        const kdG = join(L([[20, 550], [68, 591], [131, 621], [162, 603], [193, 598], [225, 590], [256, 552], [288, 547], [319, 535], [413, 534], [476, 531], [507, 534], [539, 540], [585, 540], [632, 532], [664, 538], [695, 540], [726, 531], [757, 540], [790, 570], [852, 610], [883, 610], [915, 630], [946, 639], [978, 636], [1009, 612], [1040, 584], [1072, 576], [1134, 546], [1197, 534], [1229, 544], [1291, 576], [1323, 585], [1385, 546], [1417, 534]], 690),
            R([[0, 528], [52, 525], [87, 521], [158, 521], [229, 518], [264, 519], [299, 524], [441, 524], [476, 520], [490, 524], [547, 524]], 690));
        const kdB = join(L([[20, 541], [68, 552], [131, 584], [162, 591], [225, 591], [288, 565], [350, 543], [413, 537], [476, 534], [632, 534], [757, 535], [790, 550], [852, 575], [883, 583], [915, 590], [978, 611], [1009, 611], [1072, 594], [1134, 575], [1197, 546], [1229, 544], [1291, 556], [1323, 565], [1354, 563], [1417, 546]], 690),
            R([[0, 546], [52, 537], [122, 526], [229, 522], [264, 522], [299, 525], [441, 525], [476, 522], [547, 525]], 690));
        const kdPane = `<svg class="pane" width="1241" height="68" viewBox="669 837 1241 68">
            ${poly(kdG, DN, 2)}${poly(kdB, BLUE, 2)}
            <path d="M669 867H1518" stroke="#ff00ff" stroke-width="3"/>
            <path d="M669 897.500H1518" stroke="#a83a20" stroke-dasharray="3 3"/>
            ${txt(673, 851, '!BNB_KD')}${txt(728, 851, '("KD", 9, 3, 3, 80, 20, "N", 40, red, black, 9, blue, "KD 交叉標示")')}
            ${axisLine(837, 905)}${tag(858, 872, BLUE, '')}${tag(860, 875, '#ff00ff', '80.00')}${tag(890, 905, '#a52a00', '20.00')}
        </svg>`;

        const months = [[886, '四月'], [1124, '五月'], [1432.5, '六月']];
        const timeRow = `<svg class="time-row" width="1241" height="21" viewBox="669 905 1241 21">
            <path d="M669 905.500H1910" stroke="#f00"/>
            ${months.map(m => `<path d="M${m[0]} 905v5" stroke="#f00"/><text class="mon" x="${m[0] + 2}" y="922">${m[1]}</text>`).join('')}
        </svg>`;

        const sash = '<div class="sash"></div>';
        document.getElementById('chartCol').innerHTML = priceSvg + sash + volPane + sash + atrPane + sash + maPane + sash + macdPane + sash + kdPane + timeRow;
    </script>
    <script src="https://cdn.jsdelivr.net/npm/bootstrap@5.3.0/dist/js/bootstrap.bundle.min.js"></script>
</body>

</html>
